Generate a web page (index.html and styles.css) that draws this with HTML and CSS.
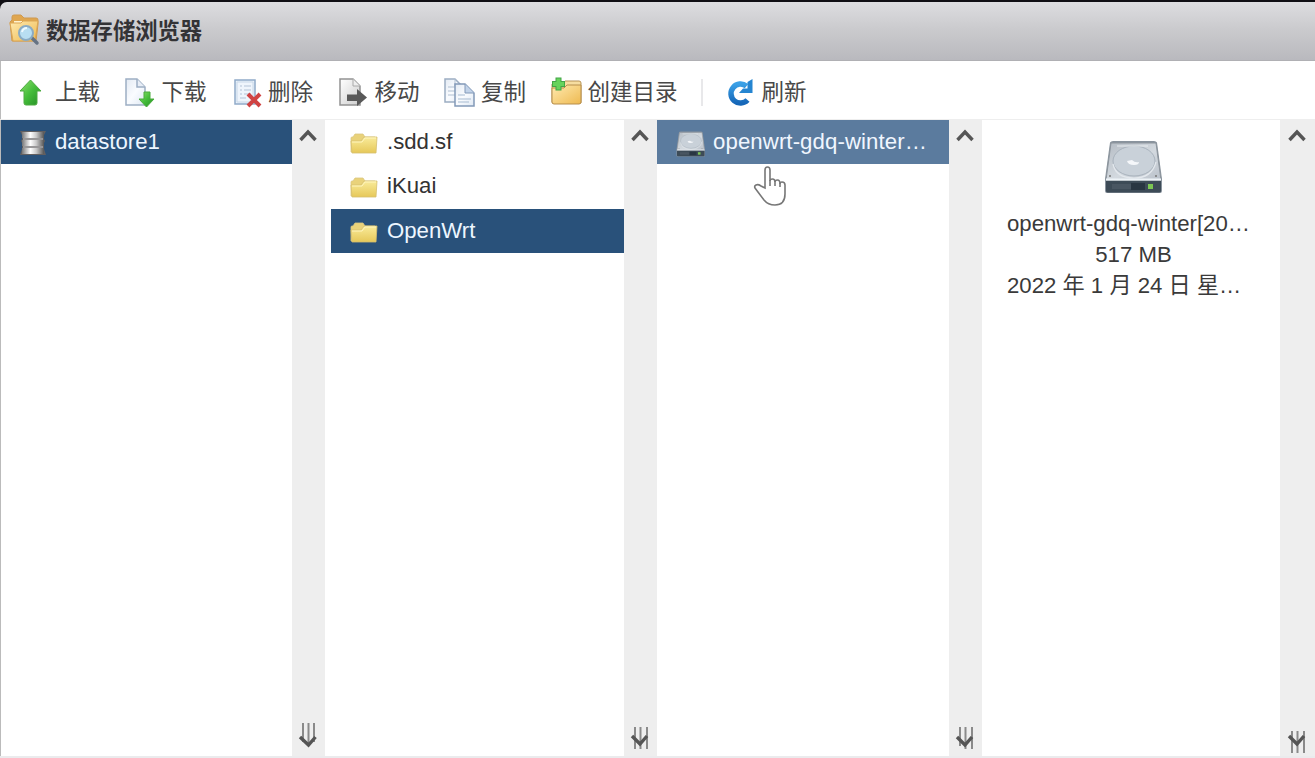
FILE: index.html
```
<!DOCTYPE html>
<html lang="zh-CN">
<head>
<meta charset="utf-8">
<title>数据存储浏览器</title>
<link rel="stylesheet" href="styles.css">
</head>
<body>
<svg class="defs" width="0" height="0">
  <defs>
    <linearGradient id="green" x1="0" y1="0" x2="1" y2="1"><stop offset="0" stop-color="#8ee06e"/><stop offset=".5" stop-color="#45bd3a"/><stop offset="1" stop-color="#238d25"/></linearGradient>
    <linearGradient id="gold" x1="0" y1="0" x2="1" y2="1"><stop offset="0" stop-color="#ffeab0"/><stop offset="1" stop-color="#eeb950"/></linearGradient>
    <linearGradient id="yellow" x1="0" y1="0" x2="0" y2="1"><stop offset="0" stop-color="#f9eb9a"/><stop offset="1" stop-color="#e6c859"/></linearGradient>
    <linearGradient id="paper" x1="0" y1="0" x2="1" y2="1"><stop offset="0" stop-color="#e3eaf3"/><stop offset=".5" stop-color="#fafcff"/><stop offset="1" stop-color="#dfe8f3"/></linearGradient>
    <linearGradient id="greypaper" x1="0" y1="0" x2="1" y2="1"><stop offset="0" stop-color="#fff"/><stop offset="1" stop-color="#cdcdcd"/></linearGradient>
    <linearGradient id="blue" x1="0" y1="0" x2="0" y2="1"><stop offset="0" stop-color="#3aa0e6"/><stop offset="1" stop-color="#1667b8"/></linearGradient>
    <linearGradient id="steel" x1="0" y1="0" x2="1" y2="0"><stop offset="0" stop-color="#777"/><stop offset=".38" stop-color="#fff"/><stop offset=".65" stop-color="#c9c9c9"/><stop offset="1" stop-color="#555"/></linearGradient>
    <linearGradient id="disk" x1="0" y1="0" x2="1" y2="1"><stop offset="0" stop-color="#b5bcc4"/><stop offset=".55" stop-color="#d3d9df"/><stop offset="1" stop-color="#bac1ca"/></linearGradient>
    <symbol id="folder" viewBox="0 0 30 24">
      <path d="M2 20V6q0-1 1-1h1l2-3h8l2 3h10v15z" fill="#e9d27a" stroke="#dbc681" stroke-width=".8"/>
      <path d="M2 9h10l3-4h13l-1 16H3z" fill="url(#yellow)" stroke="#d6bf70" stroke-width=".8"/>
      <path d="M3 10h10l3-4h11" fill="none" stroke="#fff5bd"/>
    </symbol>
    <symbol id="drive" viewBox="0 0 60 56">
      <path d="M6 2.500q1-1.500 3-1.500h41q2 0 3 1.500L58 39v12q0 2-2 2H3q-2 0-2-2V39z" fill="#89939d"/>
      <path d="M7 3h45l5 37H2z" fill="url(#disk)" stroke="#8d959d"/>
      <ellipse cx="30" cy="21" rx="21" ry="15" fill="#c9d1d9" stroke="#a9b3bd"/>
      <path d="M9 24q3 14 21 14t22-16" fill="none" stroke="#e3e8ed" stroke-width="1.200"/>
      <path d="M13 6h31" stroke="#e8ecef"/>
      <path d="M23 21q1 4 7 4 5 0 5-3-4 1-7-2z" fill="#f5f7fa"/>
      <path d="M2 39.500h55" stroke="#eef3f7" stroke-width="2"/>
      <path d="M2 41h55v10q0 1.500-2 1.500H4q-2 0-2-1.500z" fill="#3d4b57"/>
      <path d="M8 44h19v5H8z" fill="#495662"/><path d="M27 43h14v7H27z" fill="#293642"/>
      <path d="M44 44h5v5h-5z" fill="#7cc653"/>
      <circle cx="6" cy="36" r="1" fill="#777"/><circle cx="52" cy="36" r="1" fill="#777"/>
    </symbol>
  </defs>
</svg>
<div class="window">
  <header class="titlebar">
    <svg class="title-icon" width="32" height="34" viewBox="0 0 32 34">
      <path d="M3 27 1 8l2-2V3q0-2 2-2h7l3 3h12q2 0 2 2v4l-2 17z" fill="#dfa650" stroke="#cf994f"/>
      <path d="M5 7h22v3H5z" fill="#fff2ce"/>
      <path d="M1 9h11l2-2h15l-3 20H4z" fill="url(#gold)" stroke="#dba654"/>
      <path d="m22 23 6 6" stroke="#667384" stroke-width="3.500" stroke-linecap="round"/>
      <circle cx="17" cy="19" r="7" fill="#b8def2" stroke="#8aabc4" stroke-width="2"/>
      <path d="M13 18q1-4 5-4" fill="none" stroke="#effaff" stroke-width="2"/>
    </svg>
    <h1 class="title">数据存储浏览器</h1>
  </header>
  <nav class="toolbar">
    <button class="tool"><svg class="tool-icon" width="36" height="32" viewBox="0 0 36 32"><path d="M12.500 4 23 15h-4v12q0 2-2 2H8q-2 0-2-2V15H2z" fill="url(#green)" stroke="#4dab41"/></svg><span class="tool-text">上载</span></button>
    <button class="tool"><svg class="tool-icon" width="36" height="32" viewBox="0 0 36 32"><path d="M1 3h11l8 8v18H1z" fill="url(#paper)" stroke="#9daec4" stroke-width="1.500"/><path d="M12 3v8h8" fill="#e7edf6" stroke="#9daec4" stroke-width="1.500"/><path d="M19 16h6v7h4l-7.500 8-7.500-8h5z" fill="url(#green)" stroke="#4aab3d"/></svg><span class="tool-text">下载</span></button>
    <button class="tool"><svg class="tool-icon" width="36" height="32" viewBox="0 0 36 32"><path d="M4 4h20v24H4z" fill="#e9f1fa" stroke="#90abc9" stroke-width="1.500"/><path d="M6 6h16v20H6z" fill="#eff5fc" stroke="#c9d8e8"/><path d="M9 10h2m2 0h7M9 14h2m2 0h7M9 18h2m2 0h7M9 22h6" stroke="#b3c3d7"/><path d="m17 18 12 12M29 18 17 30" stroke="#d04343" stroke-width="4"/></svg><span class="tool-text">删除</span></button>
    <button class="tool"><svg class="tool-icon" width="36" height="32" viewBox="0 0 36 32"><path d="M2 3h13l7 7v19H2z" fill="url(#greypaper)" stroke="#929292" stroke-width="1.500"/><path d="M15 3v7h7" fill="#eee" stroke="#aaa"/><path d="M9 18.500h10V13l10 8.500-10 8.500v-5H9z" fill="#595959"/></svg><span class="tool-text">移动</span></button>
    <button class="tool"><svg class="tool-icon" width="36" height="32" viewBox="0 0 36 32"><path d="M1 3h10l7 7v16H1z" fill="url(#paper)" stroke="#9cadc2" stroke-width="1.500"/><path d="M11 3v7h7M4 11h7M4 15h7M4 19h7" fill="none" stroke="#b0bfd1"/><path d="M11 8h10l9 9v13H11z" fill="url(#paper)" stroke="#8299b8" stroke-width="1.500"/><path d="M21 8v9h9" fill="#c2d3e9" stroke="#8299b8"/><path d="M14 19h7M14 23h13M14 26h11" stroke="#a7bbd1"/></svg><span class="tool-text">复制</span></button>
    <button class="tool"><svg class="tool-icon" width="36" height="32" viewBox="0 0 36 32"><path d="M1 8h10l3-3h14q2 0 2 2v20H2q-1 0-1-1z" fill="#f6dda0" stroke="#b79357"/><path d="M1 12h12l3-3h14v17q0 2-2 2H3q-2 0-2-2z" fill="url(#gold)" stroke="#b78e4c"/><path d="M7.500 1.500v13M1 8h13" stroke="#43a547" stroke-width="6"/><path d="M7.500 2.500v11M2 8h11" stroke="#66d35c" stroke-width="4"/></svg><span class="tool-text">创建目录</span></button>
    <span class="separator"></span>
    <button class="tool"><svg class="tool-icon" width="36" height="32" viewBox="0 0 36 32"><path d="M21.500 10.200A9.500 9.500 0 1 0 22.500 24" fill="none" stroke="url(#blue)" stroke-width="5.500"/><path d="M27.500 3v14H14l4-4.500h4.500V6z" fill="#2585d1"/></svg><span class="tool-text">刷新</span></button>
  </nav>
  <main class="browser">
    <section class="pane pane-store">
      <div class="row selected"><svg class="row-icon" width="36" height="32" viewBox="0 0 36 32"><path d="M0 4h26l-2 4v4l1 2-1 2v6l2 6H0l2-6v-6l-1-2 1-2V8z" fill="#625f60"/><path d="M2 5h22v6H2zM2 13h22v6H2zM2 21h22v6H2z" fill="url(#steel)"/><path d="M3 12h20M3 20h20" stroke="#aaa" stroke-width="1.500"/></svg><span class="label">datastore1</span></div>
    </section>
    <div class="scroll"><svg width="20" height="16" viewBox="0 0 20 16"><path d="m2.500 12 7.500-8 7.500 8" class="chevron"/></svg><svg width="20" height="30" viewBox="0 0 20 30"><path d="M5 2v19M10.500 2v22M16 2v19" class="bars"/><path d="m2 16 8.500 8 7-8" class="chevron"/></svg></div>
    <section class="pane pane-folders">
      <div class="row"><svg class="row-icon" width="30" height="24"><use href="#folder"/></svg><span class="label">.sdd.sf</span></div>
      <div class="row"><svg class="row-icon" width="30" height="24"><use href="#folder"/></svg><span class="label">iKuai</span></div>
      <div class="row selected"><svg class="row-icon" width="30" height="24"><use href="#folder"/></svg><span class="label">OpenWrt</span></div>
    </section>
    <div class="scroll low"><svg width="20" height="16" viewBox="0 0 20 16"><path d="m2.500 12 7.500-8 7.500 8" class="chevron"/></svg><svg width="20" height="30" viewBox="0 0 20 30"><path d="M5 4v22M10.500 4v22M17 4v22" class="bars"/><path d="m2 13 8 8 7-8" class="chevron"/></svg></div>
    <section class="pane pane-files">
      <div class="row hovered"><svg class="row-icon" width="30" height="27" viewBox="0 0 60 56" preserveAspectRatio="none"><use href="#drive" width="60" height="56"/></svg><span class="label">openwrt-gdq-winter…</span></div>
      <svg class="cursor" width="34" height="42" viewBox="0 0 34 42"><path d="M12 23V5q0-3 2.500-3T17 5v11q0-2 2.500-2t2.500 3q0-2 2.500-2t2.500 4q0-2 2-2 3 0 3 3v9q0 11-10 11-7 0-11-5L2 23q-1-2 1-3t5 1z" fill="#fff" stroke="#777" stroke-width="1.600"/><path d="M17 15v6M22 16v5M27 18v4" stroke="#777" stroke-width="1.600"/></svg>
    </section>
    <div class="scroll low"><svg width="20" height="16" viewBox="0 0 20 16"><path d="m2.500 12 7.500-8 7.500 8" class="chevron"/></svg><svg width="20" height="30" viewBox="0 0 20 30"><path d="M5 4v19M10.500 4v22M17 4v22" class="bars"/><path d="m2 14 8 8 7-8" class="chevron"/></svg></div>
    <section class="pane pane-detail">
      <svg class="disk" width="60" height="56"><use href="#drive"/></svg>
      <p class="detail">openwrt-gdq-winter[20…</p>
      <p class="detail size">517 MB</p>
      <p class="detail">2022 年 1 月 24 日 星…</p>
    </section>
    <div class="scroll last"><svg width="20" height="16" viewBox="0 0 20 16"><path d="m2.500 12 7.500-8 7.500 8" class="chevron"/></svg><svg width="20" height="30" viewBox="0 0 20 30"><path d="M5 5v22M10.500 5v22M17 5v22" class="bars"/><path d="m2 10 8 8 7-8" class="chevron"/></svg></div>
  </main>
</div>
</body>
</html>
```

FILE: styles.css
```
* { box-sizing: border-box; }
body {
  margin: 0;
  background: #100f14;
  color: #333;
  font: 22.200px/30px "Liberation Sans", "Noto Sans CJK SC", sans-serif;
}
.defs { position: absolute; }
.window {
  display: flex;
  flex-direction: column;
  height: 758px;
  padding-top: 2px;
}
.titlebar {
  display: flex;
  flex: 0 0 59px;
  align-items: center;
  padding: 0 0 0 9px;
  border-bottom: 1px solid #b0b0b4;
  border-radius: 7px 0 0 0;
  background: linear-gradient(#dddde0, #cbcbce 45%, #b9b9be);
}
.title-icon { flex: none; margin: 0 5px 0 0; }
.title { margin: 2px 0 0; font-size: 22.300px; font-weight: 700; color: #333336; }
.toolbar {
  display: flex;
  flex: 0 0 58px;
  align-items: center;
  padding: 4px 0 0 17px;
  background: #fff;
  border-left: 1px solid #bbb;
}
.tool {
  display: flex;
  align-items: center;
  width: 106.500px;
  flex: none;
  padding: 0;
  border: 0;
  background: none;
  color: #484848;
  font: 22.500px/30px "Noto Sans CJK SC", sans-serif;
  white-space: nowrap;
}
.tool-icon { flex: none; }
.tool-text { margin: -4px 0 0 1px; }
.tool:nth-of-type(6) { width: 150px; }
.separator { width: 2px; height: 27px; margin-right: 22px; background: #e8e8ea; }
.browser {
  display: grid;
  flex: 1;
  grid-template-columns: 292px 33px 299px 33px 292px 33px 298px 35px;
  min-height: 0;
  border-top: 1px solid #eee;
  border-bottom: 2px solid #ebebed;
  background: #fff;
}
.pane { position: relative; min-width: 0; }
.pane-store { border-left: 1px solid #bbb; }
.pane-folders { padding-left: 6px; }
.row {
  display: flex;
  align-items: center;
  height: 44.500px;
  padding-left: 19px;
}
.row:first-child { height: 44px; }
.row-icon { flex: none; }
.pane-store .row-icon { margin-top: 2px; }
.pane-store .label { margin-left: -1px; }
.pane-folders .row-icon { margin: 4px 8px 0 -1px; }
.pane-files .row-icon { margin: 4px 7px 0 0; }
.label { white-space: nowrap; }
.pane-files .label { letter-spacing: .1px; }
.selected { background: #29517a; color: #edf6ff; }
.hovered { background: #5b7b9e; color: #f0f6ff; }
.cursor { position: absolute; left: 96px; top: 45px; }
.scroll {
  display: flex;
  flex-direction: column;
  align-items: center;
  justify-content: space-between;
  padding: 8px 2px 5px 0;
  background: #eee;
}
.low { padding-bottom: 3px; }
.last { padding-bottom: 0; }
.chevron { fill: none; stroke: #555; stroke-width: 3.400; }
.bars { fill: none; stroke: #8a8a8a; stroke-width: 2; }
.pane-detail { display: flex; flex-direction: column; padding: 20px 25px 0; }
.disk { align-self: center; margin: 0 0 12px 6px; }
.detail {
  margin: 0;
  color: #3a3a3a;
  font-size: 22.200px;
  line-height: 31.200px;
  white-space: nowrap;
}
.size { padding-left: 5px; text-align: center; }
```
